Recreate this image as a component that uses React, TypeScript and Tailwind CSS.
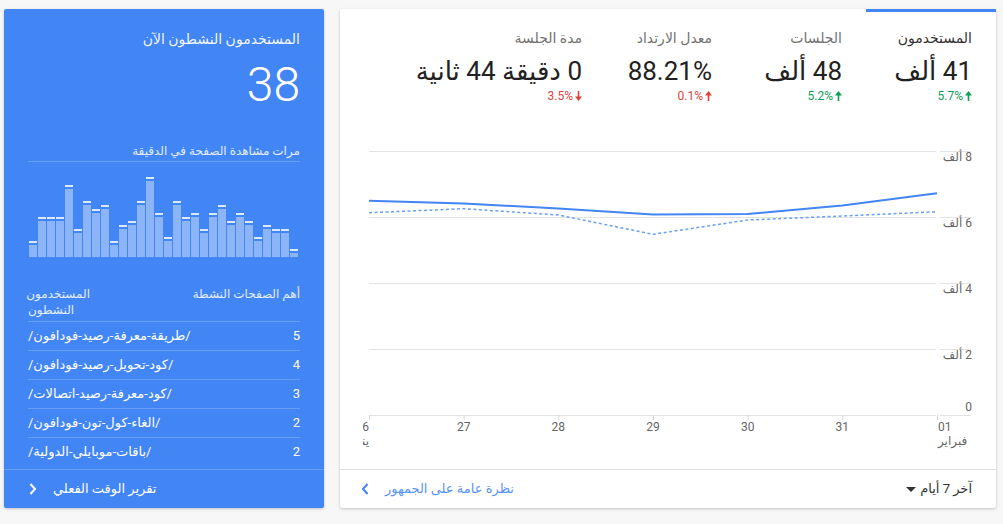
import React from "react";

const bars = [16, 40, 40, 40, 72, 28, 56, 48, 52, 16, 32, 36, 56, 80, 44, 20, 56, 40, 44, 28, 44, 52, 36, 44, 36, 20, 32, 28, 28, 8];

const rows: [string, string][] = [
  ["5", "/طريقة-معرفة-رصيد-فودافون/"],
  ["4", "/كود-تحويل-رصيد-فودافون/"],
  ["3", "/كود-معرفة-رصيد-اتصالات/"],
  ["2", "/الغاء-كول-تون-فودافون/"],
  ["2", "/باقات-موبايلي-الدولية/"],
];

const tabs = [
  { label: "المستخدمون", value: "41 ألف", change: "5.7%", up: true, good: true, selected: true },
  { label: "الجلسات", value: "48 ألف", change: "5.2%", up: true, good: true, selected: false },
  { label: "معدل الارتداد", value: "88.21%", change: "0.1%", up: true, good: false, selected: false },
  { label: "مدة الجلسة", value: "0 دقيقة 44 ثانية", change: "3.5%", up: false, good: false, selected: false },
];

function Arrow({ up, color }: { up: boolean; color: string }) {
  return (
    <svg width="7" height="10" viewBox="0 0 7 10" className="shrink-0">
      {up ? (
        <path d="M3.5 0 L7 4.5 H4.3 V10 H2.7 V4.5 H0 Z" fill={color} />
      ) : (
        <path d="M3.5 10 L7 5.5 H4.3 V0 H2.7 V5.5 H0 Z" fill={color} />
      )}
    </svg>
  );
}

const X = [29, 123.67, 218.33, 313, 407.67, 502.33, 597];
const gridY = [31, 97, 163, 229, 295];
const yLabels = ["8 ألف", "6 ألف", "4 ألف", "2 ألف", "0"];
const solid = [80.7, 83.5, 88.5, 94.5, 94, 85.5, 73.3];
const dashed = [92.7, 88.7, 95, 114.3, 100, 96, 91.7];

function linePath(ys: number[]) {
  return ys.map((y, i) => `${i === 0 ? "M" : "L"}${X[i]} ${y}`).join(" ");
}

function Chart() {
  const xLabels = ["27", "28", "29", "30", "31"];
  return (
    <svg width="656" height="349" viewBox="0 0 656 349" style={{ direction: "ltr" }} className="block">
      <defs>
        <clipPath id="clipL">
          <rect x="23" y="0" width="633" height="349" />
        </clipPath>
      </defs>
      {gridY.map((y, i) => (
        <g key={i}>
          <line x1="29" x2="596" y1={y + 0.5} y2={y + 0.5} stroke="#e3e3e3" strokeWidth="1" />
          <line x1="600" x2="631" y1={y + 0.5} y2={y + 0.5} stroke="#e3e3e3" strokeWidth="1" />
          <text
            x="632"
            y={i === 4 ? 291 : y + 10}
            textAnchor="end"
            fontSize="12"
            fill="#666"
            fontFamily="Roboto, 'DejaVu Sans', sans-serif"
          >
            {"\u202B" + yLabels[i] + "\u202C"}
          </text>
        </g>
      ))}
      {X.map((x, i) => (
        <line key={i} x1={x + 0.5} x2={x + 0.5} y1="295" y2="300" stroke="#d6d6d6" strokeWidth="1" />
      ))}
      <g fontSize="12" fill="#666" fontFamily="Roboto, 'DejaVu Sans', sans-serif" clipPath="url(#clipL)">
        <text x="29" y="311" textAnchor="end">26</text>
        <text x="29" y="325" textAnchor="end">يناير</text>
        {xLabels.map((l, i) => (
          <text key={l} x={X[i + 1]} y="311" textAnchor="middle">
            {l}
          </text>
        ))}
        <text x="598" y="311" textAnchor="start">01</text>
        <text x="598" y="325" textAnchor="start">فبراير</text>
      </g>
      <path d={linePath(dashed)} fill="none" stroke="#6a9ff6" strokeWidth="1.5" strokeDasharray="3 2.5" strokeLinejoin="round" />
      <path d={linePath(solid)} fill="none" stroke="#4285f4" strokeWidth="2" strokeLinejoin="round" />
    </svg>
  );
}

export default function App() {
  return (
    <div
      dir="rtl"
      className="w-[1003px] h-[524px] bg-[#f7f7f7] flex flex-row pt-[9px] pl-[4px] pr-[7px] gap-[16px] overflow-hidden"
      style={{ fontFamily: "Roboto, 'DejaVu Sans', 'Noto Sans', sans-serif" }}
    >
      {/* Main white panel */}
      <div className="w-[656px] h-[499px] bg-white rounded-[2px] shadow-[0_1px_3px_rgba(0,0,0,0.22)] flex flex-col shrink-0">
        <div className="flex flex-row h-[111px]">
          {tabs.map((t) => (
            <div
              key={t.label}
              className={
                "w-[130px] shrink-0 pr-[24px] pt-[16px] border-t-[3px] " +
                (t.selected ? "border-[#4285f4]" : "border-transparent")
              }
            >
              <div className={"text-[14px] leading-[20px] whitespace-nowrap " + (t.selected ? "text-[#333]" : "text-[#737373]")}>
                {t.label}
              </div>
              <div className="mt-[7px] text-[26px] leading-[32px] text-[#222] whitespace-nowrap">{t.value}</div>
              <div className="mt-px flex flex-row items-center gap-[2px] text-[12px] leading-[16px]">
                <Arrow up={t.up} color={t.good ? "#0f9d58" : "#db4437"} />
                <span className={t.good ? "text-[#0f9d58]" : "text-[#db4437]"}>{t.change}</span>
              </div>
            </div>
          ))}
        </div>
        <Chart />
        <div className="border-t border-[#e0e0e0] h-[39px] flex flex-row items-center justify-between pr-[24px] pl-[21px]">
          <div className="flex flex-row items-center gap-[4px] text-[13px] text-[#333]">
            <span>آخر 7 أيام</span>
            <svg width="10" height="5" viewBox="0 0 10 5">
              <path d="M0 0 H10 L5 5 Z" fill="#333" />
            </svg>
          </div>
          <div className="flex flex-row items-center gap-[16px] text-[13px] text-[#5a95f5]">
            <span>نظرة عامة على الجمهور</span>
            <svg width="8" height="12" viewBox="0 0 8 12">
              <path d="M6.5 1 L2 6 L6.5 11" fill="none" stroke="#4285f4" strokeWidth="2" />
            </svg>
          </div>
        </div>
      </div>

      {/* Blue realtime panel */}
      <div className="w-[320px] h-[499px] bg-[#4285f4] rounded-[2px] shadow-[0_1px_3px_rgba(0,0,0,0.22)] flex flex-col text-white shrink-0">
        <div className="px-[24px]">
          <div className="pt-[20px] text-[14px] leading-[20px] text-white/95">المستخدمون النشطون الآن</div>
          <div className="mt-[12px] text-[48px] leading-[48px] font-light">38</div>
          <div className="mt-[34px] pb-[2px] border-b border-white/20 text-[12px] leading-[16px] text-white/85">
            مرات مشاهدة الصفحة في الدقيقة
          </div>
          <div dir="ltr" className="h-[95px] flex flex-row items-end gap-px pl-px">
            {bars.map((h, i) => (
              <div key={i} className="w-[8px] flex flex-col">
                <div className="h-[2px] bg-[#dce8fd]" />
                <div className="mt-[2px] bg-[#8cb4f9]" style={{ height: h - 4 }} />
              </div>
            ))}
          </div>
          <div className="mt-[29px] pb-[3px] flex flex-row justify-between text-[12px] leading-[16px] text-white/85">
            <div>أهم الصفحات النشطة</div>
            <div className="w-[62px] text-left">المستخدمون النشطون</div>
          </div>
          {rows.map(([n, p], i) => (
            <div key={i} className="h-[29px] border-t border-white/20 flex flex-row items-center justify-between text-[13px]">
              <span>{n}</span>
              <span>{p}</span>
            </div>
          ))}
        </div>
        <div className="flex-1" />
        <div className="border-t border-white/20 h-[39px] flex flex-row items-center justify-end gap-[16px] pl-[25px] text-[13px]">
          <span>تقرير الوقت الفعلي</span>
          <svg width="8" height="12" viewBox="0 0 8 12">
            <path d="M1.5 1 L6 6 L1.5 11" fill="none" stroke="#fff" strokeWidth="2" />
          </svg>
        </div>
      </div>
    </div>
  );
}
